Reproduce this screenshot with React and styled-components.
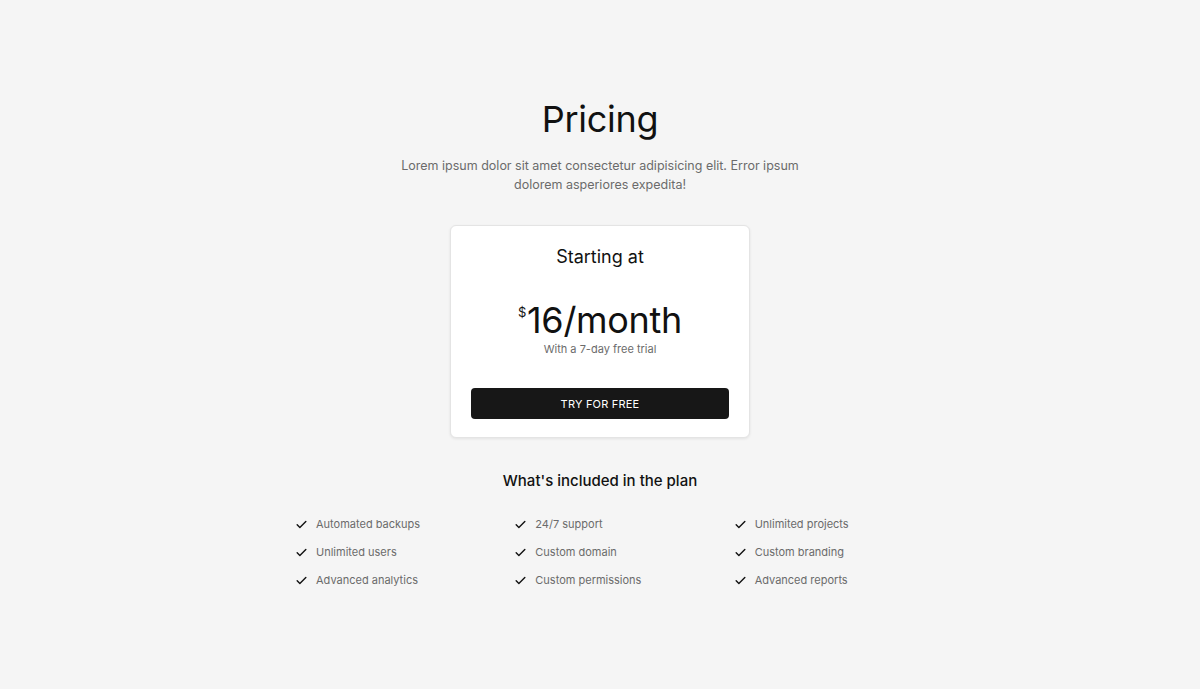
import React from 'react'
import styled, { createGlobalStyle } from 'styled-components'

const GlobalStyle = createGlobalStyle`
  html, body {
    margin: 0;
    padding: 0;
    background: #f5f5f5;
    font-family: Inter, "Noto Sans", sans-serif;
    color: #111;
  }
`

const Page = styled.main`
  display: flex;
  flex-direction: column;
  align-items: center;
  padding-top: 97px;
  min-height: 689px;
  box-sizing: border-box;
`

const Title = styled.h1`
  margin: 0;
  font-size: 36px;
  line-height: 44px;
  font-weight: 400;
  letter-spacing: -0.3px;
`

const Subtitle = styled.p`
  margin: 15px 0 0;
  width: 400px;
  text-align: center;
  font-size: 12.5px;
  line-height: 19px;
  color: #6b6b6b;
`

const Card = styled.section`
  margin-top: 31px;
  width: 300px;
  box-sizing: border-box;
  padding: 20px 20px 18px;
  background: #fff;
  border: 1px solid #e4e4e4;
  border-radius: 6px;
  box-shadow: 0 1px 3px rgba(0, 0, 0, 0.08);
  display: flex;
  flex-direction: column;
  align-items: center;
`

const CardLabel = styled.div`
  font-size: 18px;
  line-height: 22px;
`

const Price = styled.div`
  margin-top: 30px;
  font-size: 36px;
  line-height: 44px;
  letter-spacing: -0.3px;
  display: flex;
  align-items: flex-start;
`

const Currency = styled.span`
  font-size: 13px;
  line-height: 13px;
  margin-top: 8px;
  margin-right: 1px;
`

const Note = styled.div`
  font-size: 11px;
  line-height: 14px;
  color: #6b6b6b;
`

const Button = styled.button`
  margin-top: 32px;
  width: 100%;
  height: 31px;
  border: 0;
  border-radius: 4px;
  background: #171717;
  color: #fff;
  font-family: inherit;
  font-size: 11px;
  letter-spacing: 0.2px;
  cursor: pointer;
`

const SectionTitle = styled.h2`
  margin: 33px 0 0;
  font-size: 15px;
  line-height: 20px;
  font-weight: 500;
`

const FeatureGrid = styled.ul`
  list-style: none;
  margin: 25px 0 0;
  padding: 0;
  width: 610px;
  display: grid;
  grid-template-columns: repeat(3, 1fr);
  column-gap: 48px;
  row-gap: 12px;
`

const Feature = styled.li`
  display: flex;
  align-items: center;
  gap: 8px;
  font-size: 11px;
  line-height: 16px;
  color: #6b6b6b;
`

const Check = () => (
  <svg width="13" height="13" viewBox="0 0 24 24" fill="none" stroke="#111" strokeWidth="2.6" strokeLinecap="round" strokeLinejoin="round">
    <path d="M4 12.5l5 5L20 6.5" />
  </svg>
)

const features = [
  'Automated backups',
  '24/7 support',
  'Unlimited projects',
  'Unlimited users',
  'Custom domain',
  'Custom branding',
  'Advanced analytics',
  'Custom permissions',
  'Advanced reports',
]

const App = () => (
  <>
    <GlobalStyle />
    <Page>
      <Title>Pricing</Title>
      <Subtitle>
        Lorem ipsum dolor sit amet consectetur adipisicing elit. Error ipsum
        dolorem asperiores expedita!
      </Subtitle>
      <Card>
        <CardLabel>Starting at</CardLabel>
        <Price>
          <Currency>$</Currency>16/month
        </Price>
        <Note>With a 7-day free trial</Note>
        <Button>TRY FOR FREE</Button>
      </Card>
      <SectionTitle>What's included in the plan</SectionTitle>
      <FeatureGrid>
        {features.map((f) => (
          <Feature key={f}>
            <Check />
            {f}
          </Feature>
        ))}
      </FeatureGrid>
    </Page>
  </>
)

export default App
